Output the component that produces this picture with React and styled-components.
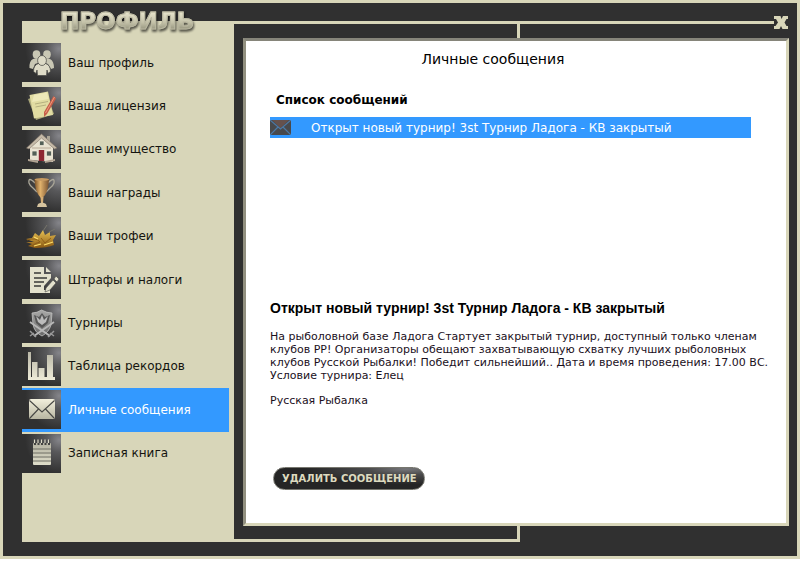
import React from "react";
import styled, { createGlobalStyle } from "styled-components";

const beige = "#d8d6b9";
const dark = "#303030";
const blue = "#3399ff";

const GlobalStyle = createGlobalStyle`
  *, *::before, *::after { box-sizing: border-box; }
  body { margin: 0; background: #fff; color: #000; font-family: "DejaVu Sans", Verdana, sans-serif; }
  h1, h2, h3, p, ul { margin: 0; padding: 0; }
  ul { list-style: none; }
  button { font: inherit; cursor: pointer; }
`;

const Window = styled.div`
  position: relative;
  border: 3px solid ${beige};
  background: ${dark};
  padding: 12px 0 14px 19px;
`;

const TitleBar = styled.header`
  display: flex;
  align-items: flex-end;
  height: 9px;
  padding-right: 9px;
`;

const Rule = styled.div`
  flex: 1;
  height: 3px;
  background: ${beige};
`;

const Title = styled.h1`
  position: absolute;
  z-index: 1;
  left: 57px;
  top: 3px;
  font: 700 23px/30px "DejaVu Sans", Verdana, sans-serif;
  color: transparent;
  background: linear-gradient(#e3e0c8 25%, #c3c1a8 55%, #85846f 88%);
  background-clip: text;
  -webkit-text-stroke: 1px #b9b7a0;
  filter: drop-shadow(1px 2px 1px rgba(0, 0, 0, 0.6));
`;

const CloseButton = styled.button`
  display: flex;
  width: 14px;
  height: 3px;
  align-items: center;
  justify-content: center;
  padding: 0;
  border: 0;
  background: none;
  svg { flex: none; }
`;

const Body = styled.div`
  display: flex;
`;

const Sidebar = styled.nav`
  flex: 0 0 212px;
  padding: 17px 5px 67px 0;
  background: ${beige};
`;

const Menu = styled.ul`
  display: grid;
  grid-template-rows: repeat(10, 1fr);
  height: 434px;
`;

const MenuLink = styled.a`
  display: flex;
  align-items: center;
  gap: 7px;
  height: 100%;
  font-size: 12px;
  line-height: 16px;
  text-decoration: none;
  white-space: nowrap;
  color: ${(p) => (p.$active ? "#fff" : "#14140f")};
  background: ${(p) => (p.$active ? blue : "transparent")};
`;

const Tile = styled.span`
  display: block;
  width: 39px;
  height: 39px;
  background: radial-gradient(circle at 95% 15%, #85858a 0, #58585a 25%, ${dark} 68%);
  svg { display: block; }
`;

const Stage = styled.div`
  position: relative;
  flex: 1;
  min-width: 0;
  display: flex;
  padding: 14px 8px 16px 9px;
  &::before {
    content: "";
    position: absolute;
    inset: 0 auto 0 0;
    width: calc(51% - 1px);
    border: solid ${beige};
    border-width: 0 3px 3px 0;
  }
`;

const Panel = styled.main`
  position: relative;
  flex: 1;
  min-width: 0;
  border: 3px solid;
  border-color: #86857a ${beige} ${beige} #929080;
  background: #fff;
  padding: 9px 12px 33px 24px;
`;

const PanelTitle = styled.h2`
  font-size: 14px;
  font-weight: 400;
  line-height: 18px;
  text-align: center;
  padding-right: 58px;
`;

const Inbox = styled.section`
  min-height: 231px;
  padding: 24px 23px 0 0;
`;

const InboxTitle = styled.h3`
  padding-left: 6px;
  font: 700 12px/16px "DejaVu Sans", Verdana, sans-serif;
`;

const MessageRow = styled.button`
  display: flex;
  align-items: center;
  gap: 20px;
  width: 100%;
  height: 21px;
  margin-top: 9px;
  padding: 0;
  border: 0;
  background: ${blue};
  color: #fff;
  font-size: 12px;
  text-align: left;
`;

const Message = styled.article`
  min-height: 168px;
  font-size: 11px;
  line-height: 13px;
  color: #1b101c;
`;

const MessageTitle = styled.h3`
  font: 700 14px/18px "Liberation Sans", Arial, sans-serif;
  color: #000;
  margin-bottom: 13px;
`;

const Paragraph = styled.p`
  margin-bottom: 12px;
`;

const DeleteButton = styled.button`
  display: block;
  height: 23px;
  margin-left: 3px;
  padding: 0 7px 0 8px;
  border: 1px solid #77776f;
  border-radius: 12px;
  background: radial-gradient(ellipse at 88% 5%, #77777a 0, #4b4b4c 20%, #252525 55%);
  color: #dddabf;
  font: 700 10px/20px "DejaVu Sans", Verdana, sans-serif;
  white-space: nowrap;
`;

const Gradient = ({ id, from = "#f1eedb", to = "#9a9986" }) => (
  <linearGradient id={id} x1="0" y1="0" x2="0" y2="1">
    <stop offset="0" stopColor={from} />
    <stop offset="1" stopColor={to} />
  </linearGradient>
);

const Icon = ({ children }) => (
  <svg width="39" height="39" viewBox="0 0 39 39" aria-hidden="true">{children}</svg>
);

const PeopleIcon = () => (
  <Icon>
    <g fill="#c9c7b4">
      <ellipse cx="14.5" cy="11.5" rx="3.8" ry="4.2" />
      <ellipse cx="25" cy="11.5" rx="3.8" ry="4.2" />
      <path d="M11 16 Q7 18 7.5 25 L11 26 L13 21 L16 20 V15Z M28 16 Q32 18 32 25 L29 26 L26 21 L23 20 V15Z" />
    </g>
    <g fill="#dedbc7" stroke="#444441" strokeWidth=".7">
      <path d="M16.5 20.5 Q11.5 22 11.5 28.5 L14 30.5 L15 27 L15.5 32.5 H24.5 L25 27 L26 30.5 L28.5 28.5 Q28.5 22 23.5 20.5Z" />
      <ellipse cx="20" cy="17.5" rx="4.4" ry="5" />
    </g>
  </Icon>
);

const LicenseIcon = () => (
  <Icon>
    <path d="M6 12 L24 6 L32 27 L14 33Z" fill="#aaa779" />
    <path d="M7.5 8 L26 4.5 L31 28 L12 31.5Z" fill="#e1dca2" />
    <path d="M12 8 L25 5.5 L26.5 12 L10 15Z" fill="#eee9b9" />
    <path d="M13 17 L26 14.5 M13.5 20 L24 18" stroke="#aaa576" strokeWidth=".8" />
    <path d="M31.5 9 L34 11.5 L25 27 L22 30 L22 25Z" fill="#c55e49" />
    <path d="M32.5 10 L23.5 26" stroke="#ef9a7c" />
  </Icon>
);

const HouseIcon = () => (
  <Icon>
    <path d="M25 6 H28 V13 L25 10Z" fill="#aba596" />
    <path d="M8 17 L19.5 6 L31 17 V32 L8 30Z" fill="#e9e3d1" />
    <path d="M4.5 18 L19.5 4 L35 18 L32.5 19 L19.5 8 L7 19Z" fill="#c5baa8" stroke="#817467" strokeWidth=".6" />
    <path d="M10 18 H29" stroke="#b9aa97" />
    <path d="M17.5 11 H22 V15.5 H17.5Z M10 21 H15 V26 H10Z M24.5 21 H29.5 V26 H24.5Z" fill="#546057" stroke="#f5eee0" strokeWidth=".7" />
    <path d="M16.8 20 H22.2 V31 H16.8Z" fill="#8e2732" />
    <path d="M6 29 L16 31 V33 L6 31Z M23 31 L33 29 V31 L23 33Z" fill="#b1a393" />
  </Icon>
);

const CupIcon = () => (
  <Icon>
    <defs>
      <linearGradient id="cup" x1="0" x2="1">
        <stop offset="0" stopColor="#7b5126" />
        <stop offset=".4" stopColor="#e2b36d" />
        <stop offset="1" stopColor="#76502f" />
      </linearGradient>
    </defs>
    <path d="M13 10 Q6 3 7 10 Q8 13 11 15 Q13 17 15 19 M26 10 Q33 3 32 10 Q31 13 28 15 Q26 17 24 19" fill="none" stroke="#aaa698" strokeWidth="1.3" />
    <path d="M12.5 6 H27 Q26.5 17 23 22 L20.5 25 H19 L16.5 22 Q13 17 12.5 6Z" fill="url(#cup)" />
    <ellipse cx="19.8" cy="6.5" rx="7.2" ry="1.5" fill="#c79a61" />
    <path d="M18.5 24 H21.5 L21 30 H19Z" fill="#d4ad75" />
    <path d="M16 31 Q20 28 24 31 L25 34 H15Z" fill="#d6c49f" />
  </Icon>
);

const TrophyFishIcon = () => (
  <Icon>
    <defs><Gradient id="fish" from="#e8c254" to="#8a5812" /></defs>
    <path d="M4 22 L10 21 L13 16 L17 19 L21 13 L23 18 L28 15 L28 19 L34 18 L31 23 L32 28 Q25 31 13 31 L6 29 L10 27 L4 25 L12 25Z" fill="url(#fish)" />
    <path d="M5 23 Q14 20 18 25 Q13 26 10 29 M19 21 L23 26 L29 21" fill="none" stroke="#8a5a16" strokeWidth=".9" />
    <path d="M12 20 L16 22 M22 28 L31 25 M12 29 L19 27" stroke="#ffdf69" strokeWidth="1.2" />
    <path d="M21 14 L25 8 M27 15 L33 12" stroke="#77756b" strokeWidth="1" />
  </Icon>
);

const EditIcon = () => (
  <Icon>
    <path d="M8 7 H22 V14 H29 V18 L22 26 V30 H28 V33 H8Z M24 7 L29 12 H24Z" fill="#e3e1cd" />
    <path d="M12 13 H19 M12 18 H25 M12 22 H22 M12 26 H19" stroke="#3a3a38" strokeWidth="1.7" />
    <path d="M24 28 L31 20 L34 23 L28 30 L23 32Z M32 19 L34 16 L37 19 L35 22Z" fill="#e3e1cd" stroke="#464644" strokeWidth=".6" />
  </Icon>
);

const ShieldIcon = () => (
  <Icon>
    <defs><Gradient id="shield" from="#aaaaa9" to="#686868" /></defs>
    <path d="M10 9 Q15 9 19.5 6 Q25 9 30 9 L29 21 Q27 28 20 32 Q12 28 11 20Z" fill="url(#shield)" stroke="#c1c1c0" strokeWidth=".8" />
    <path d="M12 11 L17 13 L20 9 L23 13 L28 11 L26 19 L20 24 L14 19Z" fill="#565656" />
    <path d="M14 12 L18 16 L20 11 L22 16 L26 12 L24 18 L20 21 L16 18Z" fill="#bcbcbc" />
    <path d="M8 18 L28 32 M32 18 L12 32" stroke="#b7b7b7" strokeWidth="1.8" />
    <path d="M8 27 L14 33 M32 27 L26 33 M8 32 L12 29 M32 32 L28 29" stroke="#999" strokeWidth="1.5" />
  </Icon>
);

const ChartIcon = () => (
  <Icon>
    <defs><Gradient id="bars" from="#b8b6a5" to="#eeebd8" /></defs>
    <path d="M6 5 H9 V30 H10 V15 H15.5 V30 H16.5 V21 H22.5 V30 H25 V8 H31 V30 H33 V33 H6Z" fill="url(#bars)" />
  </Icon>
);

const MailIcon = () => (
  <Icon>
    <defs><Gradient id="mail" from="#f2efdc" to="#b8b6a2" /></defs>
    <rect x="7" y="9" width="26" height="20" rx="2" fill="url(#mail)" />
    <path d="M7.5 10.5 L20 22 L32.5 10.5 M8 28 L16.5 19 M32 28 L23.5 19" fill="none" stroke="#474744" strokeWidth="1.1" />
  </Icon>
);

const NotebookIcon = () => (
  <Icon>
    <defs><Gradient id="notebook" from="#b6b4a3" to="#deddc9" /></defs>
    <rect x="11" y="9" width="18" height="22" rx="1" fill="url(#notebook)" />
    <path d="M13 11 V6 M16.5 11 V6 M20 11 V6 M23.5 11 V6 M27 11 V6" stroke="#454543" strokeWidth="2" />
    <path d="M12.5 9 V5.5 M16 9 V5.5 M19.5 9 V5.5 M23 9 V5.5 M26.5 9 V5.5" stroke="#dfddca" strokeWidth="1.2" />
    <path d="M11 15 H29 M11 19 H29 M11 23 H29 M11 27 H29" stroke="#6f6e65" strokeWidth="1" />
  </Icon>
);

const items = [
  ["Ваш профиль", PeopleIcon],
  ["Ваша лицензия", LicenseIcon],
  ["Ваше имущество", HouseIcon],
  ["Ваши награды", CupIcon],
  ["Ваши трофеи", TrophyFishIcon],
  ["Штрафы и налоги", EditIcon],
  ["Турниры", ShieldIcon],
  ["Таблица рекордов", ChartIcon],
  ["Личные сообщения", MailIcon, true],
  ["Записная книга", NotebookIcon],
];

export default function App() {
  return (
    <>
      <GlobalStyle />
      <Window>
        <Title>ПРОФИЛЬ</Title>
        <TitleBar>
          <Rule />
          <CloseButton type="button" aria-label="Закрыть">
            <svg width="14" height="13" viewBox="0 0 14 13" aria-hidden="true">
              <path d="M0 0H6.5L7.5 3L9 0H14V3H12.5L10.5 6.5L12.5 10H14V13H8.5L7 10L5.5 13H0V10H1.5L4 6.5L2 3H0Z" fill={beige} />
            </svg>
          </CloseButton>
        </TitleBar>
        <Body>
          <Sidebar aria-label="Профиль">
            <Menu>
              {items.map(([label, Glyph, active]) => (
                <li key={label}>
                  <MenuLink href="#" $active={active} aria-current={active ? "page" : undefined}>
                    <Tile><Glyph /></Tile>
                    {label}
                  </MenuLink>
                </li>
              ))}
            </Menu>
          </Sidebar>
          <Stage>
            <Panel>
              <PanelTitle>Личные сообщения</PanelTitle>
              <Inbox>
                <InboxTitle>Список сообщений</InboxTitle>
                <MessageRow type="button">
                  <svg width="21" height="15" viewBox="0 0 21 15" aria-hidden="true">
                    <rect width="21" height="15" fill="#48494c" />
                    <path d="M2 0H19L10.5 8Z" fill="#65514d" />
                    <path d="M0 0L10.5 9L21 0M0 15L8 7M21 15L13 7" fill="none" stroke="#4c79a6" strokeWidth="1.2" />
                  </svg>
                  Открыт новый турнир! 3st Турнир Ладога - КВ закрытый
                </MessageRow>
              </Inbox>
              <Message>
                <MessageTitle>Открыт новый турнир! 3st Турнир Ладога - КВ закрытый</MessageTitle>
                <Paragraph>
                  На рыболовной базе Ладога Стартует закрытый турнир, доступный только членам клубов РР! Организаторы обещают захватывающую схватку лучших рыболовных клубов Русской Рыбалки! Победит сильнейший.. Дата и время проведения: 17.00 ВС. Условие турнира: Елец
                </Paragraph>
                <Paragraph>Русская Рыбалка</Paragraph>
              </Message>
              <DeleteButton type="button">УДАЛИТЬ СООБЩЕНИЕ</DeleteButton>
            </Panel>
          </Stage>
        </Body>
      </Window>
    </>
  );
}
